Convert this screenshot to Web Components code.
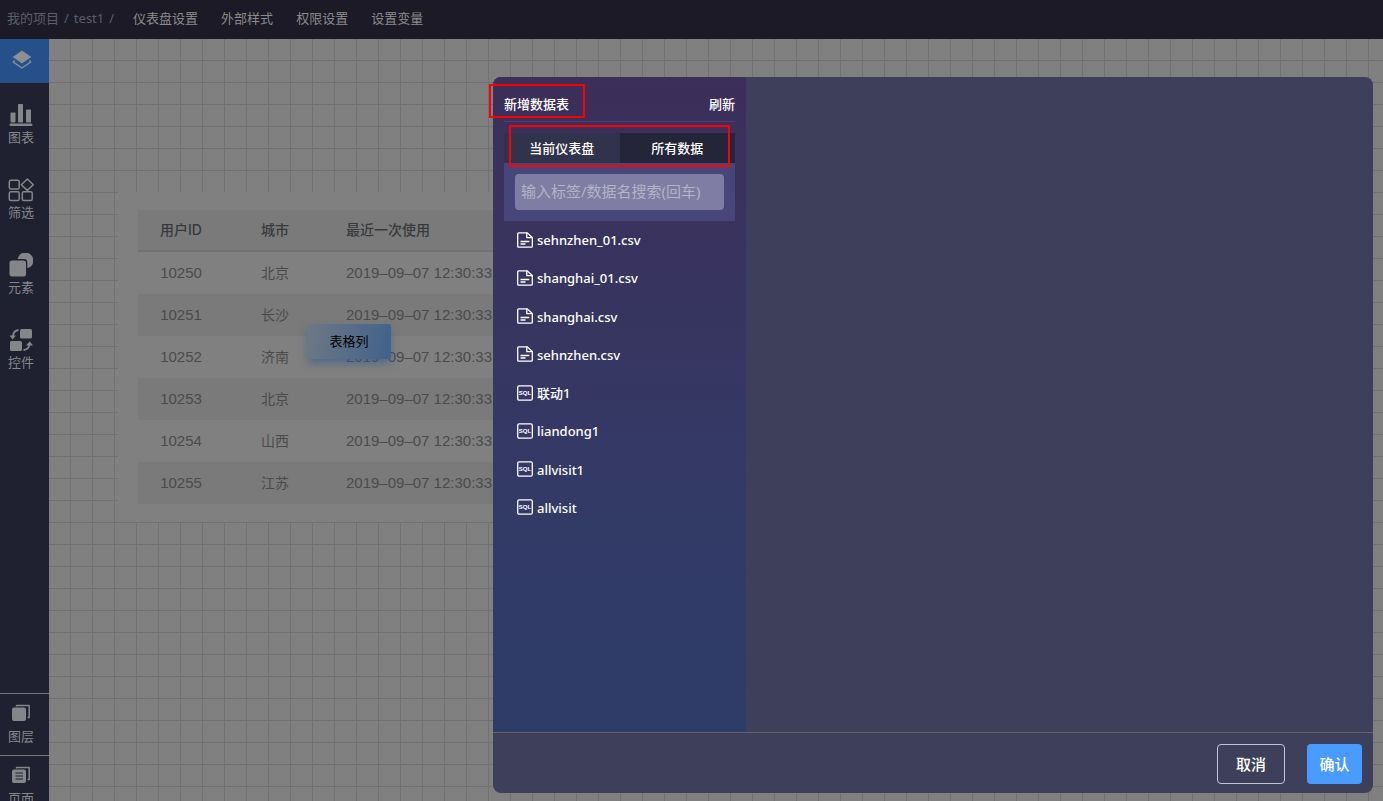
<!DOCTYPE html>
<html lang="zh-CN">
<head>
<meta charset="utf-8">
<meta name="viewport" content="width=device-width, initial-scale=1">
<title>仪表盘编辑器</title>
<style>
  html, body { margin: 0; height: 100%; }
  body { font: 13px/20px "Noto Sans", "Noto Sans CJK SC", sans-serif; background: #808080; }
</style>
</head>
<body>
<dash-app></dash-app>
<script>
const define = (name, html, setup) => {
  const template = document.createElement('template');
  template.innerHTML = html;
  customElements.define(name, class extends HTMLElement {
    connectedCallback() {
      if (this.shadowRoot) return;
      const root = this.attachShadow({ mode: 'open' });
      root.append(template.content.cloneNode(true));
      if (setup) setup(this, root);
    }
  });
};

const ICONS = {
  layers: '<svg width="20" height="20" viewBox="0 0 20 20"><path d="M10 .6 19.300 7 10 13.400 .7 7Z" fill="currentColor"/><path d="M2.600 10.400 1.300 12 10 18 18.700 12 17.400 10.400" fill="none" stroke="currentColor" stroke-width="1.300"/></svg>',
  chart: '<svg width="24" height="24" viewBox="0 0 24 24" fill="currentColor"><rect x="1.5" y="9.5" width="5" height="10" rx=".8"/><rect x="9" y="1" width="5" height="18.500" rx=".8"/><rect x="17" y="6.500" width="5" height="13" rx=".8"/><rect x="0.500" y="20.500" width="23" height="2.500" rx="1.200"/></svg>',
  filter: '<svg width="26" height="24" viewBox="0 0 26 24" fill="none" stroke="currentColor" stroke-width="1.500"><rect x="1.300" y="2.200" width="9.900" height="8.800" rx="1.500"/><rect x="1.300" y="13.800" width="9.900" height="8.800" rx="1.500"/><rect x="14.300" y="13.800" width="9.900" height="8.800" rx="1.500"/><path d="M19.300 1 25.300 6.800 19.300 12.400 13.300 6.800Z" stroke-linejoin="round"/></svg>',
  shapes: '<svg width="24" height="24" viewBox="0 0 24 24" fill="currentColor"><path d="M8.500 6A8 8 0 1 1 18.300 15.300V9.500Q18.300 6 15 6Z"/><rect x=".5" y="7.500" width="16.500" height="16" rx="2.500"/></svg>',
  swap: '<svg width="24" height="24" viewBox="0 0 24 24" fill="currentColor"><rect x="11" y="1" width="12" height="9.500" rx="1.500"/><rect x="1" y="13" width="12" height="10" rx="1.500"/><path d="M9.500 2Q4.500 2.500 4 8" fill="none" stroke="currentColor" stroke-width="1.800"/><path d="M.5 7.500H6.800L3.700 11.500Z"/><path d="M14.500 22Q19.800 21.500 20.500 16.500" fill="none" stroke="currentColor" stroke-width="1.800"/><path d="M17 17.500 20.800 13.200 24 17.500Z"/></svg>',
  stack: '<svg width="20" height="18" viewBox="0 0 20 18"><rect x="1" y="3.500" width="14" height="13.500" rx="2" fill="currentColor"/><path d="M5.500 2.500V1.500H18.200V13.500H16.500" fill="none" stroke="currentColor" stroke-width="1.500" stroke-linejoin="round"/></svg>',
  pages: '<svg width="20" height="18" viewBox="0 0 20 18"><rect x="1" y="3.500" width="14" height="13.500" rx="2" fill="currentColor"/><path d="M5.500 2.500V1.500H18.200V13.500H16.500" fill="none" stroke="currentColor" stroke-width="1.500" stroke-linejoin="round"/><path d="M4.500 7H12M4.500 10H12M4.500 13H12" stroke="#1f2030" stroke-width="1"/></svg>',
  file: '<svg width="16" height="16" viewBox="0 0 16 16" fill="none" stroke="#fff" stroke-width="1.300"><path d="M1.700 15.200Q.7 15.200 .7 14.200V1.800Q.7.8 1.700.8H10.200L15.300 5.500V14.200Q15.300 15.200 14.300 15.200Z"/><path d="M9.800.8V5.700H15.300M3.500 9.500H12.300M3.500 12H8.500"/></svg>',
  sql: '<svg width="16" height="16" viewBox="0 0 16 16"><rect x=".7" y=".8" width="14.600" height="14.400" rx="1.500" fill="none" stroke="#fff" stroke-width="1.300"/><text x="8" y="10" text-anchor="middle" font-family="Liberation Sans, sans-serif" font-weight="700" font-size="6" fill="#fff">SQL</text></svg>'
};

const iconSetup = (el, root) => { root.querySelector('.icon').innerHTML = ICONS[el.getAttribute('icon')]; };

define('dash-app', `
  <style>
    :host { display: flex; flex-direction: column; height: 100vh; overflow: hidden; }
    main { flex: 1; min-height: 0; display: flex; position: relative; }
    table-source-dialog { position: absolute; inset: 38px 10px 8px 493px; }
    design-canvas { flex: 1; min-width: 0; }
  </style>
  <top-bar></top-bar>
  <main>
    <side-bar></side-bar>
    <design-canvas></design-canvas>
    <table-source-dialog></table-source-dialog>
  </main>`);

define('top-bar', `
  <style>
    :host { display: flex; align-items: center; height: 39px; box-sizing: border-box; padding: 0 7px 4px; background: #1b1a26; color: #5d5e6c; white-space: nowrap; }
    a { color: inherit; text-decoration: none; }
    .path { display: flex; gap: 5px; }
    nav { display: flex; gap: 23px; margin-left: 19px; color: #8b8b8b; }
  </style>
  <div class="path"><a href="#projects">我的项目</a><span>/</span><a href="#test1">test1</a><span>/</span></div>
  <nav><a href="#dash">仪表盘设置</a><a href="#style">外部样式</a><a href="#auth">权限设置</a><a href="#vars">设置变量</a></nav>`);

define('side-bar', `
  <style>
    :host { display: flex; flex-direction: column; width: 49px; background: #1f2030; overflow: hidden; }
    .tools { display: flex; flex-direction: column; gap: 31px; padding-top: 20px; }
    .bottom { margin-top: auto; margin-bottom: -16px; }
    .bottom side-item { box-sizing: border-box; height: 62px; border-top: 1px solid #747679; padding-top: 7px; }
    .home { height: 44px; padding: 0 5px 2px 0; border: 0; background: #25508a; color: #8c8f94; display: grid; place-items: center; }
    .home svg { display: block; }
  </style>
  <button class="home" aria-label="图层总览">${ICONS.layers}</button>
  <div class="tools">
    <side-item icon="chart">图表</side-item>
    <side-item icon="filter">筛选</side-item>
    <side-item icon="shapes">元素</side-item>
    <side-item icon="swap">控件</side-item>
  </div>
  <div class="bottom">
    <side-item icon="stack" small>图层</side-item>
    <side-item icon="pages" small>页面</side-item>
  </div>`);

define('side-item', `
  <style>
    :host { display: block; color: #85868a; }
    button { display: flex; flex-direction: column; align-items: center; width: 100%; padding: 0 7px 0 0; border: 0; background: none; font: inherit; color: inherit; }
    .icon { display: grid; place-items: center; height: 24px; }
    .label { line-height: 20px; }
    :host([small]) .label { line-height: 22px; }
  </style>
  <button><span class="icon"></span><span class="label"><slot></slot></span></button>`, iconSetup);

define('design-canvas', `
  <style>
    :host { display: block; background:
      repeating-linear-gradient(to right, transparent 0 21px, #717171 21px 22px),
      repeating-linear-gradient(to bottom, transparent 0 21px, #717171 21px 22px), #808080; }
    user-table { margin: 153px 69px 0; }
  </style>
  <user-table></user-table>`);

define('user-table', `
  <style>
    :host { display: block; position: relative; padding: 18px 20px; background: #808080; font-family: "Liberation Sans", "Noto Sans CJK SC", sans-serif; font-size: 15px; color: #4b4b4b; }
    table { width: 100%; table-layout: fixed; border-collapse: separate; border-spacing: 0; }
    .id { width: 86px; } .city { width: 102px; }
    th, td { box-sizing: border-box; height: 42px; padding: 0; text-align: center; white-space: nowrap; }
    th, td:nth-child(2) { font-size: 14px; }
    th:last-child, td:last-child { text-align: left; padding-left: 20px; }
    th { font-family: Inter, "Noto Sans CJK SC", sans-serif; font-weight: 500; color: #383a3e; background: #7a7a7a; border-bottom: 2px solid #717275; }
    tbody tr:nth-child(even) { background: #7a7a7a; }
    .chip { position: absolute; left: 189px; top: 132px; width: 84px; height: 35px; display: grid; place-items: center; border-radius: 2px;
      background: linear-gradient(100deg, #6e7884, #41628c); box-shadow: 0 5px 8px -1px rgba(50, 90, 145, .65); color: #000; font-size: 13px; }
  </style>
  <table>
    <colgroup><col class="id"><col class="city"><col></colgroup>
    <thead><tr><th>用户ID</th><th>城市</th><th>最近一次使用</th></tr></thead>
    <tbody></tbody>
  </table>
  <div class="chip">表格列</div>`, (el, root) => {
  root.querySelector('tbody').innerHTML = ['北京', '长沙', '济南', '北京', '山西', '江苏']
    .map((city, i) => `<tr><td>${10250 + i}</td><td>${city}</td><td>2019–09–07 12:30:33</td></tr>`).join('');
});

define('source-item', `
  <style>
    :host { display: flex; align-items: center; }
    button { display: flex; align-items: center; gap: 4px; padding: 0; border: 0; background: none; color: #fff; font: inherit; font-weight: 500; }
    .icon { display: grid; padding-bottom: 1px; }
  </style>
  <button><span class="icon"></span><span><slot></slot></span></button>`, iconSetup);

define('source-panel', `
  <style>
    :host { display: block; width: 253px; box-sizing: border-box; padding: 11px; border-radius: 8px 0 0 0; color: #fff; font-weight: 500;
      background: linear-gradient(#3c2f5a, #373560 35%, #333a66 65%, #2e3c68); }
    button { border: 0; padding: 0; background: none; color: inherit; font: inherit; }
    header { position: relative; box-sizing: border-box; display: flex; justify-content: space-between; align-items: center; height: 34px; padding-bottom: 2px; border-bottom: 1px solid #4b4270; }
    h2 { margin: 0; font: inherit; }
    .tabs { position: relative; display: flex; margin-top: 11px; }
    .tabs button { flex: 1; height: 30px; padding-bottom: 1px; background: #25253a; }
    .tabs .on { background: #31324b; }
    .search { display: block; padding: 11px; background: #47457a; }
    input { display: block; box-sizing: border-box; width: 100%; height: 36px; padding: 0 6px 2px; border: 0; border-radius: 4px; background: #7f7da3; color: #fff; font: inherit; font-weight: 400; font-size: 15px; }
    input::placeholder { color: #b3b4c5; opacity: 1; }
    .list { display: grid; grid-auto-rows: 1fr; height: 306px; padding-left: 13px; }
    .mark { position: absolute; border: 2px solid #f00; pointer-events: none; }
    header .mark { inset: -4px 150px 3px -15px; }
    .tabs .mark { inset: -8px 5px -4px 5px; }
  </style>
  <header><h2>新增数据表</h2><button>刷新</button><span class="mark"></span></header>
  <div class="tabs"><button class="on">当前仪表盘</button><button>所有数据</button><span class="mark"></span></div>
  <label class="search"><input type="text" aria-label="搜索" placeholder="输入标签/数据名搜索(回车)"></label>
  <div class="list">
    <source-item icon="file">sehnzhen_01.csv</source-item>
    <source-item icon="file">shanghai_01.csv</source-item>
    <source-item icon="file">shanghai.csv</source-item>
    <source-item icon="file">sehnzhen.csv</source-item>
    <source-item icon="sql">联动1</source-item>
    <source-item icon="sql">liandong1</source-item>
    <source-item icon="sql">allvisit1</source-item>
    <source-item icon="sql">allvisit</source-item>
  </div>`);

define('table-source-dialog', `
  <style>
    :host { display: flex; flex-direction: column; border-radius: 8px; background: #3e3f5b; }
    .body { flex: 1; min-height: 0; display: flex; }
    footer { display: flex; justify-content: flex-end; align-items: center; gap: 22px; box-sizing: border-box; height: 61px; padding: 2px 11px 0; border-top: 1px solid #62636b; }
    button { height: 40px; border-radius: 4px; font: inherit; font-size: 15px; font-weight: 500; color: #fff; padding: 0; }
    .cancel { width: 68px; border: 1px solid #c0c4d6; background: none; }
    .ok { width: 55px; border: 0; background: #4a9bff; }
  </style>
  <div class="body" role="dialog" aria-label="新增数据表"><source-panel></source-panel></div>
  <footer><button class="cancel">取消</button><button class="ok">确认</button></footer>`);
</script>
</body>
</html>
